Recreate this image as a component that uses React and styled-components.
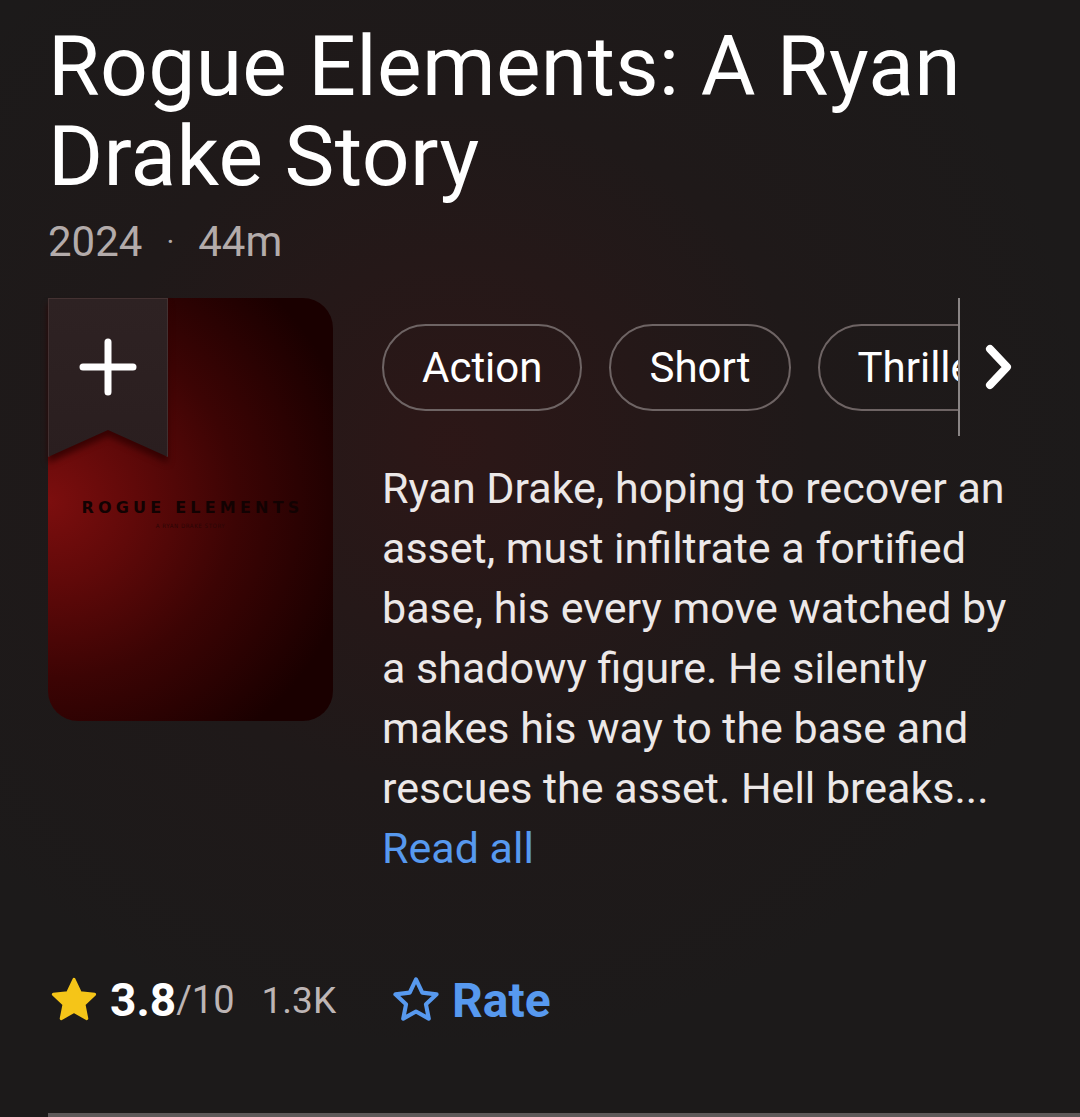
import React from "react";
import styled, { createGlobalStyle } from "styled-components";

const GlobalStyle = createGlobalStyle`
  html, body {
    margin: 0;
    padding: 0;
    background: #1c1a1a;
  }
  body {
    font-family: Roboto, "Noto Sans", "Liberation Sans", sans-serif;
    -webkit-font-smoothing: antialiased;
  }
`;

const Page = styled.div`
  width: 1080px;
  height: 1117px;
  box-sizing: border-box;
  padding: 22px 0 0 48px;
  overflow: hidden;
  background:
    radial-gradient(ellipse 60% 55% at 42% 40%, rgba(58, 20, 20, 0.55) 0%, rgba(40, 22, 22, 0.25) 55%, rgba(28, 26, 26, 0) 100%),
    #1c1a1a;
  color: #fff;
  display: flex;
  flex-direction: column;
`;

const Title = styled.h1`
  margin: 0;
  font-size: 84px;
  line-height: 90px;
  font-weight: 400;
  letter-spacing: 0.3px;
  color: #ffffff;
`;

const Meta = styled.div`
  margin-top: 16px;
  display: flex;
  align-items: center;
  gap: 24px;
  font-size: 42px;
  line-height: 48px;
  color: #b3abaa;
`;

const Dot = styled.span`
  font-size: 30px;
`;

const Body = styled.div`
  margin-top: 32px;
  display: flex;
  gap: 49px;
`;

const Poster = styled.div`
  position: relative;
  flex: 0 0 285px;
  height: 423px;
  border-radius: 30px;
  background:
    radial-gradient(ellipse 110% 70% at 0% 48%, #7c0e0e 0%, #600909 28%, #3c0404 60%, #1a0000 100%);
  display: flex;
  flex-direction: column;
  align-items: center;
  padding-top: 200px;
  box-sizing: border-box;
`;

const Ribbon = styled.div`
  position: absolute;
  left: 0;
  top: 0;
  width: 120px;
  height: 159px;
  filter: drop-shadow(0 6px 3px rgba(45, 0, 0, 0.8));
`;

const RibbonShape = styled.div`
  width: 100%;
  height: 100%;
  background: linear-gradient(180deg, #2e2223 0%, #2a1e1f 100%);
  box-shadow: inset 0 0 0 1px rgba(110, 80, 80, 0.35);
  clip-path: polygon(0 0, 100% 0, 100% 100%, 50% 83%, 0 100%);
  display: flex;
  justify-content: center;
  padding-top: 40px;
  box-sizing: border-box;
`;

const PosterTitle = styled.div`
  font-family: "DejaVu Sans", "Liberation Sans", sans-serif;
  font-weight: 700;
  font-size: 16px;
  letter-spacing: 4.2px;
  padding-left: 4px;
  color: #120202;
`;

const PosterSub = styled.div`
  margin-top: 5px;
  font-family: "DejaVu Sans Condensed", "Liberation Sans", sans-serif;
  font-size: 6px;
  letter-spacing: 0.6px;
  color: #2a0505;
`;

const Side = styled.div`
  display: flex;
  flex-direction: column;
  width: 652px;
`;

const GenreBar = styled.div`
  display: flex;
  align-items: center;
  height: 138px;
`;

const Chips = styled.div`
  display: flex;
  gap: 27px;
  width: 576px;
  overflow: hidden;
  align-self: center;
`;

const Chip = styled.div`
  flex: 0 0 auto;
  height: 87px;
  box-sizing: border-box;
  padding: 0 38px;
  border: 2px solid #6e6464;
  border-radius: 44px;
  display: flex;
  align-items: center;
  font-size: 42px;
  color: #ffffff;
`;

const Divider = styled.div`
  align-self: stretch;
  width: 2px;
  background: #8a8585;
`;

const Chevron = styled.div`
  margin-left: 22px;
  display: flex;
  align-items: center;
`;

const Description = styled.p`
  margin: 22px 0 0;
  font-size: 43px;
  line-height: 60px;
  color: #ece8e8;
`;

const ReadAll = styled.a`
  display: block;
  font-size: 43px;
  line-height: 60px;
  color: #5799ef;
  text-decoration: none;
`;

const RatingRow = styled.div`
  margin-top: 92px;
  display: flex;
  align-items: center;
  height: 60px;
`;

const Score = styled.span`
  margin-left: 10px;
  font-size: 46px;
  font-weight: 700;
  color: #ffffff;
`;

const OutOf = styled.span`
  font-size: 38px;
  color: #bdb5b5;
`;

const Votes = styled.span`
  margin-left: 27px;
  font-size: 37px;
  color: #bdb5b5;
`;

const RateButton = styled.div`
  margin-left: 54px;
  display: flex;
  align-items: center;
  gap: 10px;
  font-size: 48px;
  font-weight: 700;
  color: #5799ef;
`;

const BottomLine = styled.div`
  margin-top: auto;
  height: 4px;
  background: #5e5959;
`;

const StarPath =
  "M12 2.5l2.9 6.1 6.6.8-4.9 4.6 1.3 6.6L12 17.3l-5.9 3.3 1.3-6.6-4.9-4.6 6.6-.8z";

export default function App() {
  const genres = ["Action", "Short", "Thriller"];
  return (
    <>
      <GlobalStyle />
      <Page>
        <Title>
          Rogue Elements: A Ryan
          <br />
          Drake Story
        </Title>
        <Meta>
          <span>2024</span>
          <Dot>·</Dot>
          <span>44m</span>
        </Meta>

        <Body>
          <Poster>
            <Ribbon>
              <RibbonShape>
                <svg width="58" height="58" viewBox="0 0 58 58">
                  <path
                    d="M29 4v50M4 29h50"
                    stroke="#fff"
                    strokeWidth="7"
                    strokeLinecap="round"
                  />
                </svg>
              </RibbonShape>
            </Ribbon>
            <PosterTitle>ROGUE ELEMENTS</PosterTitle>
            <PosterSub>A RYAN DRAKE STORY</PosterSub>
          </Poster>

          <Side>
            <GenreBar>
              <Chips>
                {genres.map((g) => (
                  <Chip key={g}>{g}</Chip>
                ))}
              </Chips>
              <Divider />
              <Chevron>
                <svg width="32" height="50" viewBox="0 0 32 50">
                  <path
                    d="M8 7l17 18-17 18"
                    fill="none"
                    stroke="#fff"
                    strokeWidth="8"
                    strokeLinecap="round"
                    strokeLinejoin="round"
                  />
                </svg>
              </Chevron>
            </GenreBar>
            <Description>
              Ryan Drake, hoping to recover an asset, must infiltrate a
              fortified base, his every move watched by a shadowy figure. He
              silently makes his way to the base and rescues the asset. Hell
              breaks...
            </Description>
            <ReadAll href="#">Read all</ReadAll>
          </Side>
        </Body>

        <RatingRow>
          <svg width="52" height="52" viewBox="0 0 24 24">
            <path d={StarPath} fill="#f5c518" stroke="#f5c518" strokeWidth="1.4" strokeLinejoin="round" />
          </svg>
          <Score>3.8</Score>
          <OutOf>/10</OutOf>
          <Votes>1.3K</Votes>
          <RateButton>
            <svg width="52" height="52" viewBox="0 0 24 24">
              <path d={StarPath} fill="none" stroke="#5799ef" strokeWidth="1.9" strokeLinejoin="round" />
            </svg>
            Rate
          </RateButton>
        </RatingRow>
        <BottomLine />
      </Page>
    </>
  );
}
